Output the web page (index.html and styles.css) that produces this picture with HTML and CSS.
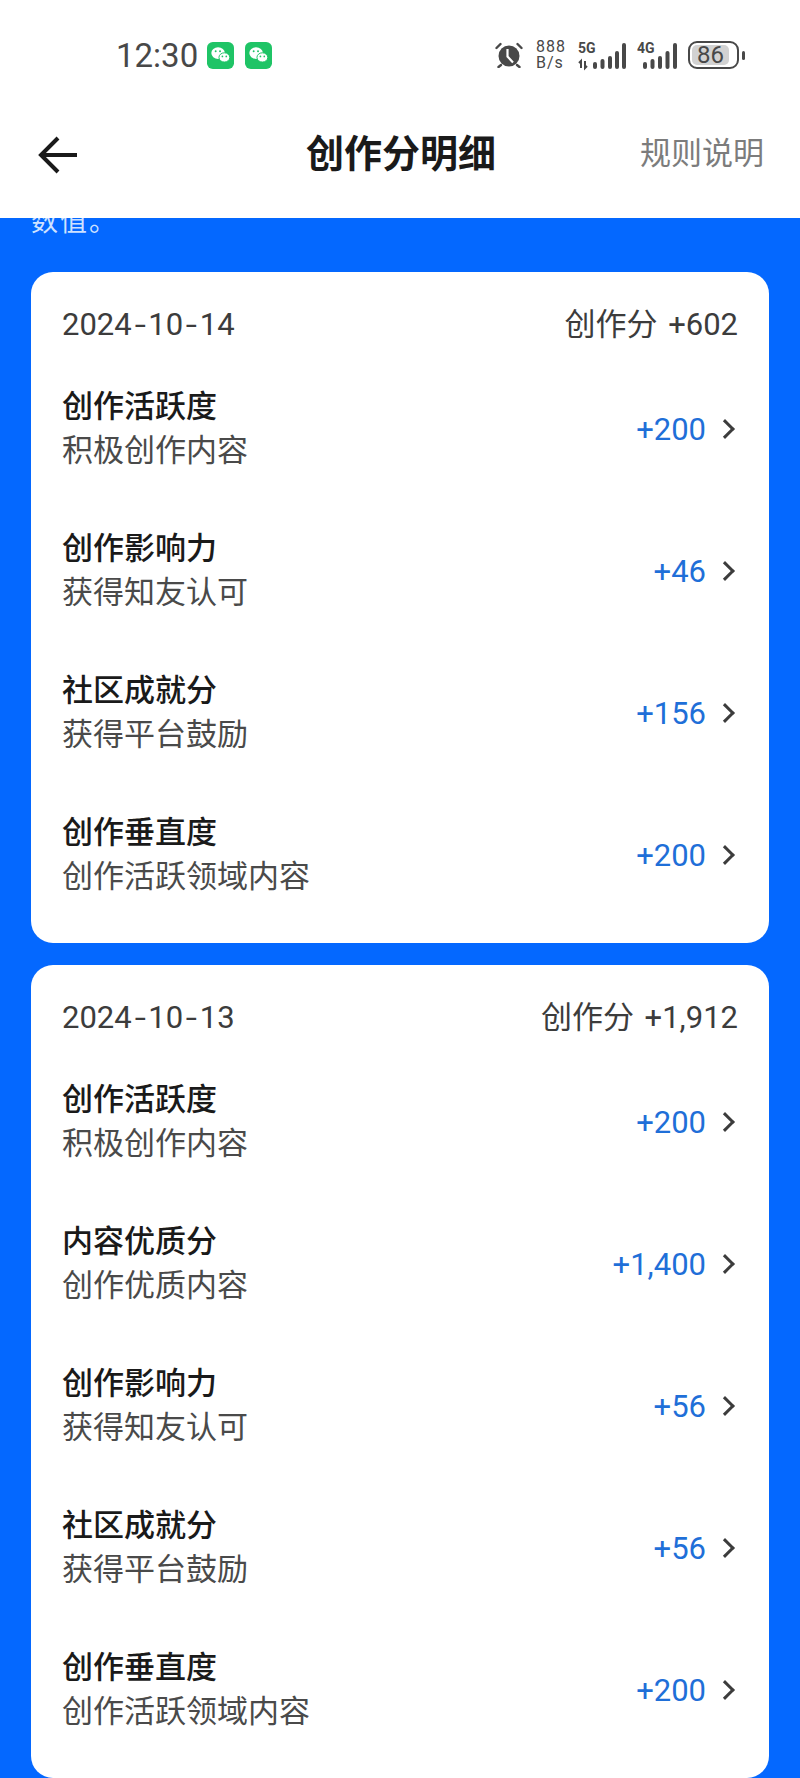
FILE: index.html
```html
<!DOCTYPE html>
<html lang="zh-CN">
<head>
  <meta charset="UTF-8" />
  <meta name="viewport" content="width=device-width, initial-scale=1.0" />
  <title>创作分明细</title>
  <link rel="stylesheet" href="styles.css">
</head>
<body>
  <div class="statusbar">
    <div class="status-left">
      <span class="clock">12:30</span>
      <svg class="wechat" viewBox="0 0 28 28"><rect width="28" height="28" rx="6" fill="#1fc466"/><ellipse cx="11.5" cy="11.5" rx="7" ry="6" fill="#fff"/><ellipse cx="18" cy="16" rx="5.6" ry="4.8" fill="#fff" stroke="#1fc466" stroke-width="1"/><circle cx="9" cy="9.5" r="1" fill="#1fc466"/><circle cx="13.5" cy="9.5" r="1" fill="#1fc466"/><circle cx="16" cy="15" r="0.9" fill="#1fc466"/><circle cx="20" cy="15" r="0.9" fill="#1fc466"/></svg>
      <svg class="wechat" viewBox="0 0 28 28"><rect width="28" height="28" rx="6" fill="#1fc466"/><ellipse cx="11.5" cy="11.5" rx="7" ry="6" fill="#fff"/><ellipse cx="18" cy="16" rx="5.6" ry="4.8" fill="#fff" stroke="#1fc466" stroke-width="1"/><circle cx="9" cy="9.5" r="1" fill="#1fc466"/><circle cx="13.5" cy="9.5" r="1" fill="#1fc466"/><circle cx="16" cy="15" r="0.9" fill="#1fc466"/><circle cx="20" cy="15" r="0.9" fill="#1fc466"/></svg>
    </div>
    <div class="status-right">
      <svg class="alarm" viewBox="0 0 28 26"><circle cx="14" cy="14" r="10.5" fill="#484848"/><path d="M12.5 7v7.5l5.5 6" fill="none" stroke="#fff" stroke-width="2.2"/><path d="M1.5 6l4-4M26.5 6l-4-4M6 23l-2.5 2M22 23l2.5 2" stroke="#484848" stroke-width="2.4" stroke-linecap="round"/></svg>
      <div class="speed"><span>888</span><span>B/s</span></div>
      <svg class="signal s5g" viewBox="0 -3 48 33">
        <text x="0" y="11" class="net">5G</text>
        <path class="arrows" d="M3 26v-7l-2 2M7 19v7l2-2"/>
        <rect x="15" y="20" width="4" height="7" rx="2"/><rect x="22.5" y="17" width="4" height="10" rx="2"/><rect x="30" y="14" width="4" height="13" rx="2"/><rect x="37" y="9" width="4" height="18" rx="2"/><rect x="44" y="1" width="4" height="26" rx="2"/>
      </svg>
      <svg class="signal s4g" viewBox="0 -3 40 33">
        <text x="0" y="11" class="net">4G</text>
        <rect x="6" y="20" width="4" height="7" rx="2"/><rect x="13.5" y="17" width="4" height="10" rx="2"/><rect x="21" y="14" width="4" height="13" rx="2"/><rect x="28.5" y="9" width="4" height="18" rx="2"/><rect x="36" y="1" width="4" height="26" rx="2"/>
      </svg>
      <div class="battery"><span class="battery-level">86</span></div>
      <span class="battery-tip"></span>
    </div>
  </div>

  <header class="navbar">
    <svg class="back" viewBox="0 0 40 40"><path d="M20 2L3 19l17 17M3 19h36" fill="none" stroke="#1a1a1a" stroke-width="4"/></svg>
    <h1>创作分明细</h1>
    <a class="rules">规则说明</a>
  </header>

  <main class="content">
    <p class="note">数值。</p>

    <section class="card">
      <div class="card-head"><span>2024<span class="dash">-</span>10<span class="dash">-</span>14</span><span>创作分 +602</span></div>
      <div class="row"><div><div class="row-title">创作活跃度</div><div class="row-sub">积极创作内容</div></div><div class="row-value">+200<i class="chev"></i></div></div>
      <div class="row"><div><div class="row-title">创作影响力</div><div class="row-sub">获得知友认可</div></div><div class="row-value">+46<i class="chev"></i></div></div>
      <div class="row"><div><div class="row-title">社区成就分</div><div class="row-sub">获得平台鼓励</div></div><div class="row-value">+156<i class="chev"></i></div></div>
      <div class="row"><div><div class="row-title">创作垂直度</div><div class="row-sub">创作活跃领域内容</div></div><div class="row-value">+200<i class="chev"></i></div></div>
    </section>

    <section class="card">
      <div class="card-head"><span>2024<span class="dash">-</span>10<span class="dash">-</span>13</span><span>创作分 +1,912</span></div>
      <div class="row"><div><div class="row-title">创作活跃度</div><div class="row-sub">积极创作内容</div></div><div class="row-value">+200<i class="chev"></i></div></div>
      <div class="row"><div><div class="row-title">内容优质分</div><div class="row-sub">创作优质内容</div></div><div class="row-value">+1,400<i class="chev"></i></div></div>
      <div class="row"><div><div class="row-title">创作影响力</div><div class="row-sub">获得知友认可</div></div><div class="row-value">+56<i class="chev"></i></div></div>
      <div class="row"><div><div class="row-title">社区成就分</div><div class="row-sub">获得平台鼓励</div></div><div class="row-value">+56<i class="chev"></i></div></div>
      <div class="row"><div><div class="row-title">创作垂直度</div><div class="row-sub">创作活跃领域内容</div></div><div class="row-value">+200<i class="chev"></i></div></div>
    </section>
  </main>
</body>
</html>
```

FILE: styles.css
```css
body {
  margin: 0;
  height: 1778px;
  overflow: hidden;
  display: flex;
  flex-direction: column;
  font-family: Roboto, "Noto Sans CJK SC", sans-serif;
  background: #0468ff;
}
.statusbar {
  height: 110px;
  box-sizing: border-box;
  padding: 0 55px 0 116px;
  background: white;
  display: flex;
  justify-content: space-between;
  align-items: center;
}
.status-left, .status-right {
  display: flex;
  align-items: center;
}
.clock {
  font-size: 33px;
  color: #484848;
  margin-right: 9px;
}
.wechat {
  width: 27px;
  height: 27px;
  margin-right: 11px;
}
.alarm {
  width: 28px;
  height: 26px;
  margin-right: 13px;
}
.speed {
  display: flex;
  flex-direction: column;
  font-size: 16px;
  line-height: 16px;
  letter-spacing: 1px;
  color: #484848;
  margin-right: 12px;
}
.signal {
  height: 33px;
  fill: #484848;
}
.s5g {
  width: 48px;
  margin-right: 11px;
}
.s4g {
  width: 40px;
  margin-right: 11px;
}
.net {
  font-size: 14px;
  font-weight: 700;
}
.arrows {
  fill: none;
  stroke: #484848;
  stroke-width: 2;
}
.battery {
  width: 51px;
  height: 28px;
  box-sizing: border-box;
  border: 2px solid #484848;
  border-radius: 9px;
  padding: 2px 8px 2px 2px;
  display: flex;
}
.battery-level {
  flex: 1;
  background: #d2d2d2;
  border-radius: 5px;
  font-size: 24px;
  line-height: 20px;
  text-align: center;
  color: #484848;
}
.battery-tip {
  width: 3px;
  height: 9px;
  margin-left: 3px;
  border-radius: 2px;
  background: #484848;
}
.navbar {
  height: 108px;
  box-sizing: border-box;
  padding: 0 36px 28px 38px;
  background: white;
  display: grid;
  grid-template-columns: 1fr auto 1fr;
  align-items: center;
}
.back {
  width: 40px;
  height: 40px;
  margin-top: 12px;
}
.navbar h1 {
  margin: 0;
  font-size: 38px;
  font-weight: 700;
  color: #1a1a1a;
}
.rules {
  justify-self: end;
  font-size: 31px;
  color: #7c7c7c;
}
.content {
  flex: 1;
  min-height: 0;
  overflow: hidden;
  padding: 0 31px;
}
.note {
  margin: -16px 0 30px;
  font-size: 27px;
  line-height: 40px;
  letter-spacing: 2px;
  color: #cfe2ff;
}
.card {
  background: white;
  border-radius: 22px;
  padding: 33px 31px 17px;
  margin-bottom: 22px;
}
.card-head {
  display: flex;
  justify-content: space-between;
  margin-bottom: 13px;
  font-size: 31px;
  line-height: 40px;
  word-spacing: 3px;
  color: #3c3c3c;
}
.dash {
  display: inline-block;
  padding: 0 4px;
  transform: scaleX(1.3);
}
.row {
  height: 142px;
  display: flex;
  justify-content: space-between;
  align-items: center;
}
.row-title {
  font-size: 31px;
  line-height: 44px;
  font-weight: 500;
  color: #1a1a1a;
}
.row-sub {
  font-size: 31px;
  line-height: 44px;
  color: #4a4a4a;
}
.row-value {
  display: flex;
  align-items: center;
  font-size: 31px;
  color: #1f6fd8;
}
.chev {
  width: 11px;
  height: 11px;
  margin: 0 6px 0 12px;
  border-top: 3px solid #3c3c3c;
  border-right: 3px solid #3c3c3c;
  transform: rotate(45deg);
}
```
